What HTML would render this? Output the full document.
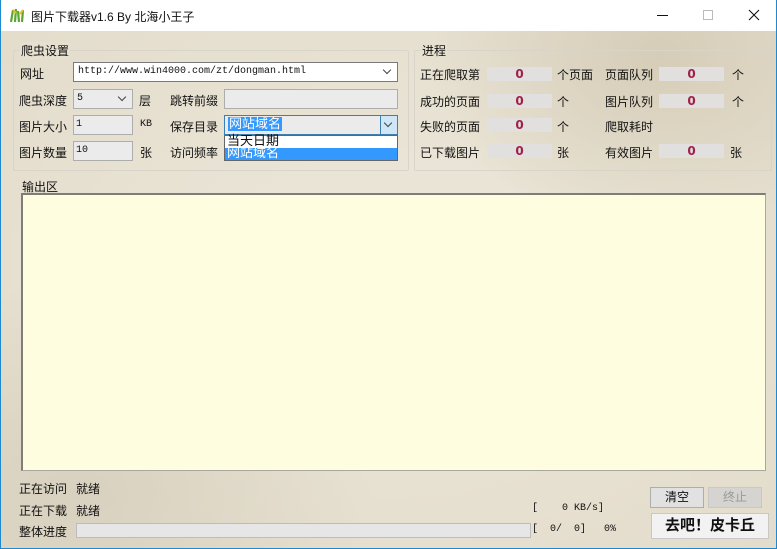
<!DOCTYPE html>
<html><head><meta charset="utf-8"><style>
*{margin:0;padding:0;box-sizing:border-box}
body{width:777px;height:549px;overflow:hidden;position:relative;background:#1e88d0;font:12px "Liberation Sans","Noto Sans CJK SC",sans-serif;color:#111}
#win{position:absolute;left:1px;top:0;width:775px;height:548px;background:#e6e0d0;background-image:radial-gradient(ellipse at 85% 10%,#d6cdb8 0,transparent 25%),radial-gradient(ellipse at 10% 90%,#d9d1bf 0,transparent 30%),radial-gradient(ellipse at 50% 50%,#ece7da 0,#e3dccb 100%)}
#title{position:absolute;left:0;top:0;width:775px;height:31px;background:#fff}
.a{position:absolute;white-space:nowrap}
.box{position:absolute;background:#fff;border:1px solid #7a7a7a}
.gbox{position:absolute;background:#ebebeb;border:1px solid #adadad}
.val{position:absolute;background:#e2e0df;height:14px;width:65px;text-align:center;color:#a0204a;font-weight:bold;line-height:14px;font-family:"DejaVu Sans",sans-serif;font-size:12px}
.grp{position:absolute;border:1px solid #d8d4ca;border-radius:2px}
.mono{font-family:"Liberation Mono",monospace;font-size:10px;line-height:16px}
.chev{position:absolute;width:6px;height:6px;border-right:1px solid #444;border-bottom:1px solid #444;transform:rotate(45deg)}
</style></head><body><div id="win">
<div id="title">
 <svg class="a" style="left:8px;top:7px" width="16" height="16"><path d="M2 15 L4 3 M6 15 L7 2 M10 15 L9 4 M13 15 L14 3" stroke="#5aa830" stroke-width="2.2"/><path d="M4 3 L7 6 M14 3 L11 7" stroke="#e8b830" stroke-width="2"/></svg>
 <span class="a" style="left:30px;top:8px;font-size:12px">图片下载器v1.6 By 北海小王子</span>
 <div class="a" style="left:656px;top:15px;width:11px;height:1px;background:#111"></div>
 <div class="a" style="left:702px;top:10px;width:10px;height:10px;border:1px solid #bbb"></div>
 <svg class="a" style="left:747px;top:9px" width="12" height="12"><path d="M1 1L11 11M11 1L1 11" stroke="#111" stroke-width="1.1"/></svg>
</div>
<div class="grp" style="left:12px;top:50px;width:396px;height:121px"></div>
<span class="a" style="left:19px;top:42px;background:#e6e0d0;padding:0 1px">爬虫设置</span>
<span class="a" style="left:19px;top:65px">网址</span>
<div class="box mono" style="left:72px;top:62px;width:325px;height:20px;padding:1px 4px">http://www.win4000.com/zt/dongman.html</div>
<div class="chev" style="left:383px;top:67px"></div>
<span class="a" style="left:18px;top:92px">爬虫深度</span>
<div class="gbox mono" style="left:72px;top:89px;width:60px;height:20px;padding:1px 3px">5</div>
<div class="chev" style="left:118px;top:94px"></div>
<span class="a" style="left:138px;top:92px">层</span>
<span class="a" style="left:169px;top:92px">跳转前缀</span>
<div class="gbox" style="left:223px;top:89px;width:174px;height:20px"></div>
<span class="a" style="left:18px;top:118px">图片大小</span>
<div class="gbox mono" style="left:72px;top:115px;width:60px;height:20px;padding:1px 2px">1</div>
<span class="a mono" style="left:139px;top:117px">KB</span>
<span class="a" style="left:169px;top:118px">保存目录</span>
<div class="gbox" style="left:223px;top:115px;width:174px;height:20px;border-color:#3c7fb1"></div>
<span class="a" style="left:227px;top:117px;background:#3399ff;color:#fff;line-height:14px;padding:0 1px;font-size:13px">网站域名</span>
<div class="a" style="left:379px;top:116px;width:17px;height:18px;background:#cfe6f8;border-left:1px solid #3c7fb1"></div>
<div class="chev" style="left:384px;top:120px"></div>
<span class="a" style="left:18px;top:144px">图片数量</span>
<div class="gbox mono" style="left:72px;top:141px;width:60px;height:20px;padding:1px 2px">10</div>
<span class="a" style="left:139px;top:144px">张</span>
<span class="a" style="left:169px;top:144px">访问频率</span>
<div class="a" style="left:223px;top:135px;width:174px;height:26px;background:#fff;border:1px solid #666"></div>
<span class="a" style="left:226px;top:134px;line-height:14px;font-size:13px">当天日期</span>
<div class="a" style="left:224px;top:148px;width:172px;height:12px;background:#3399ff"></div>
<span class="a" style="left:226px;top:146px;color:#fff;line-height:14px;font-size:13px">网站域名</span>

<div class="grp" style="left:413px;top:50px;width:358px;height:121px"></div>
<span class="a" style="left:420px;top:42px;background:#e6e0d0;padding:0 1px">进程</span>
<span class="a" style="left:419px;top:66px">正在爬取第</span><div class="val" style="left:486px;top:67px">0</div><span class="a" style="left:556px;top:66px">个页面</span>
<span class="a" style="left:604px;top:66px">页面队列</span><div class="val" style="left:658px;top:67px">0</div><span class="a" style="left:731px;top:66px">个</span>
<span class="a" style="left:419px;top:93px">成功的页面</span><div class="val" style="left:486px;top:94px">0</div><span class="a" style="left:556px;top:93px">个</span>
<span class="a" style="left:604px;top:93px">图片队列</span><div class="val" style="left:658px;top:94px">0</div><span class="a" style="left:731px;top:93px">个</span>
<span class="a" style="left:419px;top:118px">失败的页面</span><div class="val" style="left:486px;top:118px">0</div><span class="a" style="left:556px;top:118px">个</span>
<span class="a" style="left:604px;top:118px">爬取耗时</span>
<span class="a" style="left:419px;top:144px">已下载图片</span><div class="val" style="left:486px;top:144px">0</div><span class="a" style="left:556px;top:144px">张</span>
<span class="a" style="left:604px;top:144px">有效图片</span><div class="val" style="left:658px;top:144px">0</div><span class="a" style="left:729px;top:144px">张</span>

<span class="a" style="left:21px;top:178px">输出区</span>
<div class="a" style="left:20px;top:193px;width:745px;height:278px;background:#fffddf;border:1px solid #a8a8a0;border-top:2px solid #7e7e76;border-left:2px solid #7e7e76"></div>

<span class="a" style="left:18px;top:480px">正在访问</span><span class="a" style="left:75px;top:480px">就绪</span>
<span class="a" style="left:18px;top:502px">正在下载</span><span class="a" style="left:75px;top:502px">就绪</span>
<span class="a" style="left:18px;top:523px">整体进度</span>
<div class="a" style="left:75px;top:523px;width:455px;height:15px;background:#e6e6e6;border:1px solid #bcbcbc"></div>
<span class="a mono" style="left:531px;top:501px">[&nbsp;&nbsp;&nbsp;&nbsp;0 KB/s]</span>
<span class="a mono" style="left:531px;top:522px">[&nbsp;&nbsp;0/&nbsp;&nbsp;0]&nbsp;&nbsp;&nbsp;0%</span>
<div class="a" style="left:649px;top:487px;width:54px;height:21px;background:#e1e1e1;border:1px solid #adadad;text-align:center;line-height:19px">清空</div>
<div class="a" style="left:707px;top:487px;width:54px;height:21px;background:#d6d4d0;border:1px solid #c8c8c8;text-align:center;line-height:19px;color:#999">终止</div>
<div class="a" style="left:650px;top:513px;width:118px;height:26px;background:#f2f2f2;border:1px solid #c8c8c8;text-align:center;line-height:24px;font-size:15px;font-weight:bold">去吧！皮卡丘</div>
</div></body></html>
